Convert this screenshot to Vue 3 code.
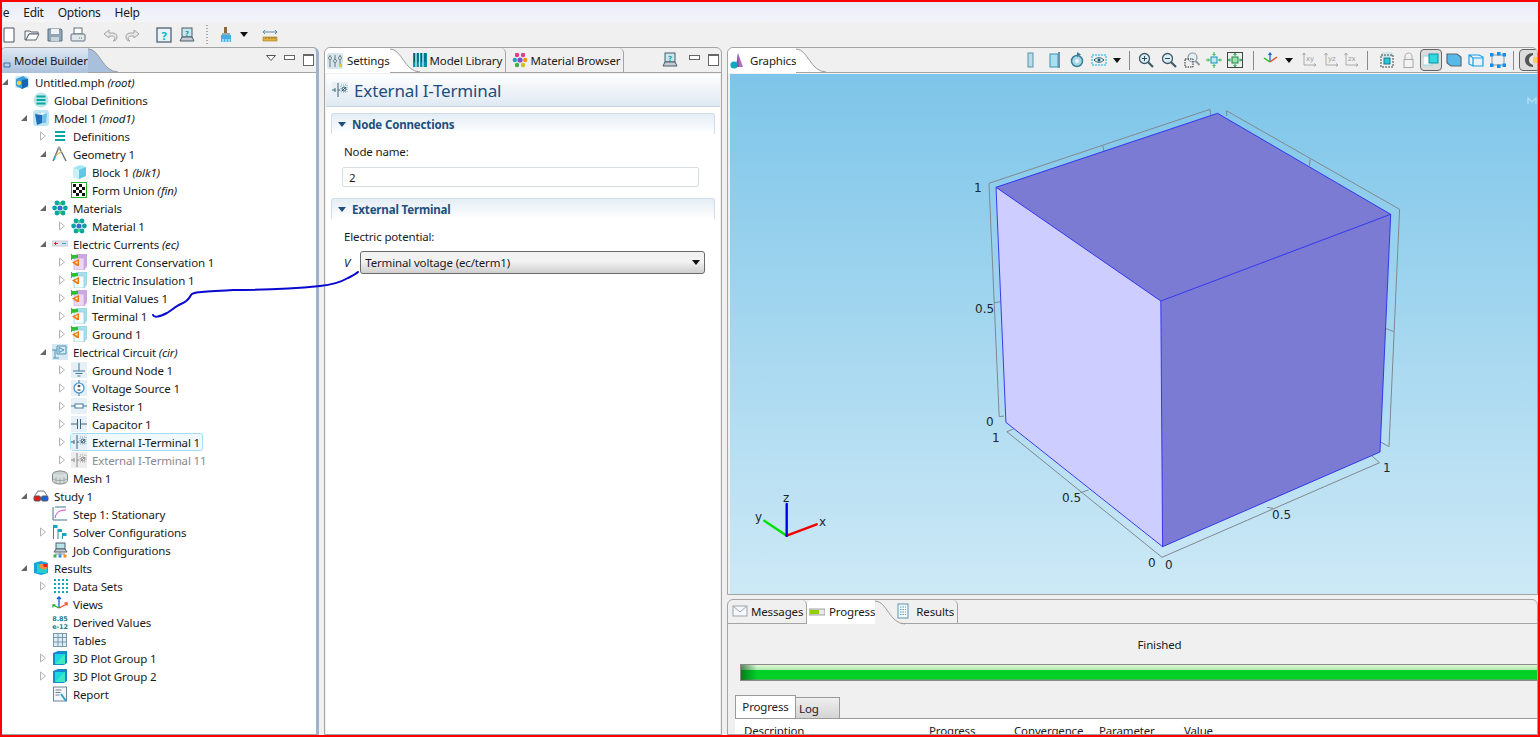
<template>
  <div class="app">
    <div class="menubar">
      <span class="menu-file">File</span>
      <span>Edit</span>
      <span>Options</span>
      <span>Help</span>
    </div>
    <div class="toolbar">
      <span
        v-for="(t, i) in mainTools"
        :key="i"
        class="tool"
        :style="{ width: t.w + 'px' }"
      >
        <svg v-if="t.icon" class="ic" viewBox="0 0 16 16" v-html="icons[t.icon]"></svg>
        <i v-else-if="t.drop" class="drop"></i>
        <i v-else-if="t.grip" class="grip"></i>
      </span>
    </div>

    <div class="main">
      <section class="panel builder">
        <header class="strip">
          <div class="tab active-blue">
            <svg class="ic builder-ic" viewBox="0 0 16 16" v-html="icons.builder"></svg>
            <span>Model Builder</span>
          </div>
          <svg class="tail" viewBox="0 0 30 24"><path d="M0 0C12 0 14 23 30 23.5H0Z" fill="#a9c0dc" /><path d="M0 .5C12 .5 14 23 30 23.5" fill="none" stroke="#9a9a9a" /></svg>
          <div class="strip-btns">
            <svg class="view-menu" viewBox="0 0 10 6"><path d="M.5.5h9L5 5.5Z" fill="#fff" stroke="#555" /></svg>
            <i class="btn-min"></i>
            <i class="btn-max"></i>
          </div>
        </header>
        <div class="tree">
          <div
            v-for="n in tree"
            :key="n.label"
            class="row"
            :class="{ ghost: n.ghost }"
            :style="{ paddingLeft: n.level * 19 + 'px' }"
          >
            <span class="arrow">
              <svg v-if="n.arrow === 'open'" viewBox="0 0 8 8"><path d="M7 1V7H1Z" fill="#666" /></svg>
              <svg v-else-if="n.arrow === 'closed'" viewBox="0 0 8 10"><path d="M1.5 1 6.5 5 1.5 9Z" fill="#fff" stroke="#b4b4b4" /></svg>
            </span>
            <span class="node" :class="{ selected: n.selected }">
              <svg class="ic" viewBox="0 0 16 16" v-html="icons[n.icon]"></svg>
              <span>{{ n.label }} <em v-if="n.tag">{{ n.tag }}</em></span>
            </span>
          </div>
        </div>
      </section>

      <section class="panel settings">
        <header class="strip">
          <div class="tab active">
            <svg class="ic" viewBox="0 0 16 16" v-html="icons.settings"></svg>
            <span>Settings</span>
          </div>
          <svg class="tail tail-settings" viewBox="0 0 30 24"><path d="M0 0C12 0 14 23 30 23.5H0Z" fill="#fff" /><path d="M0 .5C12 .5 14 23 30 23.5" fill="none" stroke="#9a9a9a" /></svg>
          <div class="tab plain library">
            <svg class="ic" viewBox="0 0 16 16" v-html="icons.library"></svg>
            <span>Model Library</span>
          </div>
          <div class="tab plain browser">
            <svg class="ic" viewBox="0 0 16 16" v-html="icons.materials"></svg>
            <span>Material Browser</span>
          </div>
          <div class="strip-btns">
            <svg class="ic help-ic" viewBox="0 0 16 16" v-html="icons.laptop"></svg>
            <i class="btn-min"></i>
            <i class="btn-max"></i>
          </div>
        </header>
        <div class="settings-body">
          <h1 class="form-title">
            <svg class="ic" viewBox="0 0 16 16" v-html="icons.iterm"></svg>
            External I-Terminal
          </h1>
          <div class="sec-head"><i class="sec-tri"></i>Node Connections</div>
          <div class="sec-body">
            <label>Node name:</label>
            <div class="input">2</div>
          </div>
          <div class="sec-head"><i class="sec-tri"></i>External Terminal</div>
          <div class="sec-body">
            <label>Electric potential:</label>
            <div class="select-row">
              <em>V</em>
              <div class="select">
                <span>Terminal voltage (ec/term1)</span>
                <i class="drop"></i>
              </div>
            </div>
          </div>
        </div>
      </section>

      <div class="right">
        <section class="panel graphics">
          <header class="strip">
            <div class="tab active">
              <svg class="ic" viewBox="0 0 16 16" v-html="icons.graphics"></svg>
              <span>Graphics</span>
            </div>
            <svg class="tail" viewBox="0 0 30 24"><path d="M0 0C12 0 14 23 30 23.5H0Z" fill="#fff" /><path d="M0 .5C12 .5 14 23 30 23.5" fill="none" stroke="#9a9a9a" /></svg>
            <div class="gfx-tools">
              <span
                v-for="(t, i) in gfxTools"
                :key="i"
                class="tool"
                :class="{ on: t.on }"
                :style="{ width: t.w + 'px' }"
              >
                <svg v-if="t.icon" class="ic" viewBox="0 0 16 16" v-html="icons[t.icon]"></svg>
                <i v-else-if="t.drop" class="drop"></i>
                <i v-else class="vsep"></i>
              </span>
            </div>
          </header>
          <svg class="canvas" viewBox="730 74 810 520">
            <defs>
              <linearGradient id="sky" x1="0" y1="0" x2="0" y2="1">
                <stop offset="0" stop-color="#7dc5e9" />
                <stop offset="1" stop-color="#cde9f6" />
              </linearGradient>
            </defs>
            <rect x="730" y="74" width="810" height="520" fill="url(#sky)" />
            <path d="M1528 104V98L1532 102 1536 98V104" fill="none" stroke="#b9dff2" stroke-width="1.2" />

            <g fill="none" stroke="#808890">
              <path d="M1004 416 999.2 416.7 989 183.3 1210 109.3 1210.8 115" />
              <path d="M1226.8 116 1226.4 110.7 1399.6 209.3 1389 446.7 1380 441.7" />
              <path d="M1102.8 145.7 1104 151.7M1310 159.3 1309.5 166M994.3 302.7 1000.5 301.7M1393.8 331.7 1385.4 328.3" />
              <path d="M1013.5 429 1006.8 431.7 1162 557.3 1379.5 462.7 1372 456" />
              <path d="M1080.4 492.7 1088.5 490M1267 507.3 1273.3 508.3" />
            </g>

            <polygon points="996,187.3 1160.8,301 1162.6,546.7 1005.9,422.3" fill="#cdcdff" />
            <polygon points="996,187.3 1217.5,113.3 1390.7,214.3 1160.8,301" fill="#7b7bd3" />
            <polygon points="1160.8,301 1390.7,214.3 1380,452 1162.6,546.7" fill="#7b7bd3" />
            <g fill="none" stroke="#2a2af0" stroke-width="0.9">
              <path d="M996 187.3 1217.5 113.3 1390.7 214.3 1160.8 301Z" />
              <path d="M996 187.3 1005.9 422.3 1162.6 546.7 1380 452 1390.7 214.3" />
              <path d="M1160.8 301 1162.6 546.7" />
            </g>

            <g class="ticks">
              <text x="974" y="192">1</text>
              <text x="975" y="313">0.5</text>
              <text x="986" y="426">0</text>
              <text x="992" y="442">1</text>
              <text x="1062" y="502">0.5</text>
              <text x="1148" y="567">0</text>
              <text x="1165" y="569">0</text>
              <text x="1272" y="519">0.5</text>
              <text x="1383" y="472">1</text>
              <text x="783" y="502">z</text>
              <text x="755" y="521">y</text>
              <text x="819" y="526">x</text>
            </g>
            <g stroke-width="2.4" stroke-linecap="round">
              <path d="M786.7 535.7 764.3 520.7" stroke="#00e000" />
              <path d="M786.7 535.7 816.7 524.3" stroke="#f00000" />
              <path d="M786.7 535.7V504" stroke="#0000f0" />
            </g>
          </svg>
        </section>

        <section class="panel bottom">
          <header class="strip">
            <div class="tab plain first">
              <svg class="ic" viewBox="0 0 16 16" v-html="icons.mail"></svg>
              <span>Messages</span>
            </div>
            <div class="tab active">
              <svg class="ic" viewBox="0 0 16 16" v-html="icons.progress"></svg>
              <span>Progress</span>
            </div>
            <svg class="tail tail-progress" viewBox="0 0 30 24"><path d="M0 0C12 0 14 23 30 23.5H0Z" fill="#f0f0f0" /><path d="M0 .5C12 .5 14 23 30 23.5" fill="none" stroke="#9a9a9a" /></svg>
            <div class="tab plain results-tab">
              <svg class="ic" viewBox="0 0 16 16" v-html="icons.results"></svg>
              <span>Results</span>
            </div>
          </header>
          <div class="bottom-body">
            <div class="finished">Finished</div>
            <div class="bar"></div>
            <div class="subtabs">
              <div class="subtab on">Progress</div>
              <div class="subtab">Log</div>
            </div>
            <div class="subtable">
              <span class="c1">Description</span>
              <span class="c2">Progress</span>
              <span class="c3">Convergence</span>
              <span class="c4">Parameter</span>
              <span class="c5">Value</span>
            </div>
          </div>
        </section>
      </div>
    </div>

    <!-- hand drawn note over the screenshot -->
    <svg class="ink" viewBox="0 0 400 100">
      <path d="M153 45C154 48 159 47 167 43 172 40 176 36 181 34 186 32 189 29 191 25 193 22 197 22 233 20 262 20 290 19 320 16 331 15 341 12 348 8 352 6 356 4 358 2" />
    </svg>
  </div>
</template>

<script setup>
const physics = (top, front, line) => `
  <path d="M3 3 6 0h10v12l-3 4H3Z" fill="${top}"/>
  <path d="M3 4h10v12H3Z" fill="${front}"/>
  <path d="M3 3 6 0h10v12l-3 4H3ZM3 4h10v12" fill="none" stroke="${line}" stroke-width=".7"/>
  <path d="M0 0h1v1h6v3L1 5v1H0Z" fill="#2fc02f"/>
  <path d="M8 5v7H6L1 8.500Z" fill="#f07a10"/>
  <path d="M4 8.500 6.500 7v3Z" fill="#fff3d0"/>`
const elecBg = '<rect width="16" height="16" fill="#e6f0f6"/>'
const cube = (a, b, c) => `
  <path d="M2 4 9 1 15 3V12L8 15 2 13Z" fill="${a}"/>
  <path d="M8 6 15 3V12L8 15Z" fill="${b}"/>
  <path d="M2 4 8 6V15L2 13Z" fill="${c}"/>`
const cluster = `
  <g fill="#0aa5a0"><circle cx="5" cy="3" r="2.4"/><circle cx="11" cy="3" r="2.4"/><circle cx="2.600" cy="8" r="2.4"/><circle cx="13.400" cy="8" r="2.4"/><circle cx="5" cy="13" r="2.4"/><circle cx="11" cy="13" r="2.4"/></g>
  <circle cx="8" cy="8" r="2.6" fill="#2f6fd0"/><circle cx="8" cy="3.5" r="1.4" fill="#3cd65c"/><circle cx="8" cy="12.5" r="1.4" fill="#3cd65c"/>`
const scale = `
  <path d="M1 10h14v4H1Z" fill="#e0b040" stroke="#a57c1a" stroke-width=".6"/>
  <path d="M4 10v2M7 10v2M10 10v2M13 10v2" stroke="#80601a" stroke-width=".7"/>
  <path d="M1 5h14M3 3 1 5l2 2M13 3l2 2-2 2" fill="none" stroke="#5a8aa0"/>`
const axes = (t) => `
  <path d="M3 1v12h12M1.5 3 3 1l1.5 2M13 11.5l2 1.5-2 1.5" fill="none" stroke="#9a9a9a" stroke-width=".8"/>
  <text x="5" y="9" font-size="7" font-family="DejaVu Sans" fill="#9a9a9a">${t}</text>`

const icons = {
  builder: '<path d="M0 3h6v2H3v8h3M9 10h6v4H9Z" fill="none" stroke="#3a6ea5"/>',
  settings: `<rect width="16" height="16" rx="2" fill="#d7e6ec"/><g stroke="#607a80" fill="none"><path d="M3 2v12M8 2v12M13 2v12"/></g><g fill="#fff" stroke="#4b686e" stroke-width=".8"><circle cx="3" cy="5" r="1.5"/><circle cx="8" cy="8" r="1.5"/><circle cx="13" cy="5" r="1.5"/></g><path d="M12 11h3v3h-3Z" fill="#f2c430"/>`,
  library: '<rect x="1" y="1" width="14" height="14" fill="#0a8fa8"/><path d="M4 1v14M7.5 1v14M11 1v14" stroke="#d8f4f8" stroke-width="1.2"/><path d="M2.5 1v9M6 1v9M9.5 1v9M13 1v9" stroke="#05596a" stroke-width="1"/>',
  materials: `<g fill="#e03c8c"><circle cx="5" cy="3" r="2.2"/><circle cx="11" cy="3" r="2.2"/></g><circle cx="2.8" cy="8" r="2.2" fill="#20a0d0"/><circle cx="13.2" cy="8" r="2.2" fill="#f09020"/><circle cx="5" cy="13" r="2.2" fill="#40b040"/><circle cx="11" cy="13" r="2.2" fill="#d0c020"/><circle cx="8" cy="8" r="2.6" fill="#8050c0"/>`,
  graphics: '<path d="M8 0 13 14H6Z" fill="#b070c0"/><path d="M8 0 6 14H9Z" fill="#8a4da0"/><circle cx="4" cy="12" r="3.6" fill="#0ca8c0"/>',
  mail: '<rect x="1" y="3" width="14" height="10" fill="#f6f8fa" stroke="#98a6b0"/><path d="M1 3 8 9l7-6" fill="none" stroke="#98a6b0"/>',
  progress: '<rect x="0" y="5" width="16" height="6" fill="#e8e8e8" stroke="#8a8a8a" stroke-width=".8"/><rect x="1" y="6" width="9" height="4" fill="#8fcf10"/>',
  results: '<rect x="3" y="1" width="10" height="14" fill="#f4f8fb" stroke="#5f93b0"/><path d="M5 4h6M5 6.5h6M5 9h6M5 11.5h6" stroke="#4aa0c8" stroke-dasharray="1.5 1"/>',
  file: '<path d="M3 1h10v14H3Z" fill="#fff" stroke="#4a5560"/>',
  open: '<path d="M1 4h5l1 1h7v2H5L2 13H1Z" fill="#eef2f5" stroke="#58656f"/><path d="M5 7h10l-3 6H2Z" fill="#fff" stroke="#58656f"/>',
  save: '<path d="M1 2h13l1 1v11H1Z" fill="#8fa5b5" stroke="#5d7080"/><rect x="4" y="2" width="8" height="5" fill="#eef2f5"/><rect x="4" y="10" width="8" height="4" fill="#c8d4dc"/>',
  print: '<rect x="4" y="1" width="8" height="6" fill="#fff" stroke="#627080"/><rect x="1" y="7" width="14" height="7" rx="1" fill="#e0e6ea" stroke="#627080"/><path d="M9 11h4" stroke="#3aa050" stroke-dasharray="1 1"/>',
  undo: '<path d="M7 3 2 7l5 4V9h3c2 0 3 1 3 3l-2 2c3 0 4-2 4-4 0-3-2-4-5-4H7Z" fill="#e8e8e8" stroke="#a4a4a4"/>',
  redo: '<path d="M9 3l5 4-5 4V9H6c-2 0-3 1-3 3l2 2c-3 0-4-2-4-4 0-3 2-4 5-4h3Z" fill="#e8e8e8" stroke="#a4a4a4"/>',
  help: '<rect x="1" y="1" width="14" height="14" fill="#eaf2f6" stroke="#40586a" stroke-width="1.2"/><text x="8" y="12.5" text-anchor="middle" font-size="11" font-weight="700" font-family="DejaVu Sans" fill="#10c0c8">?</text>',
  laptop: '<rect x="3" y="1" width="10" height="9" fill="#c8e6ee" stroke="#4a5d6a"/><text x="8" y="8.5" text-anchor="middle" font-size="7" font-weight="700" font-family="DejaVu Sans" fill="#10a0a8">?</text><path d="M3 10 1 14H15L13 10Z" fill="#c4ccd2" stroke="#4a5d6a"/>',
  brush: '<rect x="6" y="0" width="3" height="7" fill="#8a6a40"/><rect x="4" y="6" width="8" height="2" fill="#98a8b0"/><path d="M3 8h10v7H3Z" fill="#40b0e0"/><path d="M5 12v3M8 12v3M11 12v3" stroke="#fff"/>',
  ruler: scale,
  root: `<rect x="1" y="2" width="14" height="12" rx="2" fill="#cfe8f8"/><path d="M2 5 9 2l5 3v7l-6 3-6-3Z" fill="#3aa0d8"/><path d="M8 6l6-1v7l-6 3Z" fill="#1765b0"/><circle cx="5" cy="9" r="2.2" fill="#f2d040"/>`,
  globals: '<circle cx="8" cy="8" r="7.5" fill="#bfe6ea"/><path d="M3.500 4.500h9M3.500 8h9M3.500 11.500h9" stroke="#08a8a0" stroke-width="2"/>',
  model: '<rect width="16" height="16" rx="3" fill="#bde6f4"/><path d="M2 4 9 2v11l-5 2Z" fill="#1f6fb8"/><path d="M9 2l5 1-1 10-4 0Z" fill="#6fc0e8"/><path d="M2 4 9 2l5 1-5 2Z" fill="#e8f6fc"/>',
  defs: '<path d="M3 4h10M3 8h10M3 12h10" stroke="#0aa8a0" stroke-width="2"/>',
  geometry: '<path d="M7 1 1 15M7 1l7 14" stroke="#6f767a" stroke-width="1.500" fill="none"/><path d="M3 10 10 5" stroke="#e0c060" stroke-width="1.500"/><path d="M2 14 4 9" stroke="#38b0d8" stroke-width="1.500"/><circle cx="7" cy="2" r="1.500" fill="#9aa0a4"/>',
  block: cube('#a0e8f2', '#60c8e0', '#c8f2f8'),
  form: `<rect x=".5" y=".5" width="15" height="15" fill="#fff" stroke="#20b020"/><path d="M2 2h3v3H2ZM8 2h3v3H8ZM5 5h3v3H5ZM11 5h3v3h-3ZM2 8h3v3H2ZM8 8h3v3H8ZM5 11h3v3H5ZM11 11h3v3h-3Z" fill="#111"/>`,
  cluster,
  ec: '<rect y="5" width="16" height="5" fill="#dfe6ee" stroke="#a8b0ba" stroke-width=".6"/><path d="M2 7.5h4" stroke="#e02020"/><path d="M10 7.5h4" stroke="#20a0d8"/><path d="M3.5 6v3" stroke="#e02020"/>',
  physP: physics('#cda8e0', '#ecd8f4', '#c8a8dc'),
  physC: physics('#a8dfe8', '#f2fbfd', '#8cccdc'),
  circuit: '<rect width="16" height="16" fill="#d6e9f2"/><path d="M5 2h9v8H5ZM7 3.500v5l5-2.500Z" fill="none" stroke="#4a94b4"/><path d="M0 6h5M3 14V6M1 14h6" fill="none" stroke="#4a94b4"/>',
  ground: elecBg + '<path d="M8 1v8M2 9h12M4.500 11.500h7M6.500 14h3" stroke="#3f7a9c" fill="none"/>',
  source: elecBg + '<circle cx="8" cy="8" r="5" fill="#fff" stroke="#3a90c8" stroke-width="1.200"/><path d="M8 0v3M8 13v3" stroke="#3f7a9c"/><path d="M6.500 6h3M8 4.800v2.400M6.500 10h3" stroke="#223" fill="none"/>',
  resistor: elecBg + '<path d="M0 8h4M12 8h4" stroke="#3f7a9c"/><rect x="4" y="6" width="8" height="4" fill="#fff" stroke="#3f7a9c"/>',
  capacitor: elecBg + '<path d="M0 8h6.500M9.500 8H16M6.500 3v10M9.500 3v10" stroke="#3f647a" fill="none"/>',
  iterm: elecBg + '<path d="M0 8h3M3 6v4M6 1v14M6 8h2" stroke="#3f647a" fill="none"/><rect x="9" y="3" width="6" height="7" fill="none" stroke="#8aa8b8" stroke-dasharray="1 1"/><circle cx="12" cy="7" r="2" fill="none" stroke="#3f647a"/><path d="M10 9 14 5" stroke="#3f647a"/>',
  itermGhost: '<rect width="16" height="16" fill="#ededed"/><path d="M0 8h3M3 6v4M6 1v14M6 8h2" stroke="#8a8a8a" fill="none"/><rect x="9" y="3" width="6" height="7" fill="none" stroke="#aaa" stroke-dasharray="1 1"/><circle cx="12" cy="7" r="2" fill="none" stroke="#8a8a8a"/><path d="M10 9 14 5" stroke="#8a8a8a"/>',
  mesh: '<ellipse cx="8" cy="4.500" rx="7.500" ry="3.500" fill="#c8d0d0" stroke="#7c8888"/><path d="M.5 4.500v6c0 2 3.500 3.500 7.500 3.500s7.500-1.500 7.500-3.500v-6" fill="#d8dede" stroke="#7c8888"/><path d="M4 7v6M8 8v6M12 7v6M1 9c3 2 11 2 14 0" fill="none" stroke="#8a9696" stroke-width=".7"/>',
  study: '<path d="M1 9 5 3h6l4 6" fill="none" stroke="#6a7a88"/><rect x="1" y="8" width="6.500" height="5" rx="1.500" fill="#e81818" stroke="#555"/><rect x="8.500" y="8" width="6.500" height="5" rx="1.500" fill="#1860e0" stroke="#555"/>',
  step: '<path d="M1 1v13h14" fill="none" stroke="#3c7a90"/><path d="M3 12C4 6 8 4 14 4" fill="none" stroke="#d040d0"/><path d="M3 1h11" stroke="#3c7a90"/>',
  solver: '<path d="M1.500 1v14M6 5v10M10.500 9v6" stroke="#2a8aa0" fill="none"/><path d="M1.500 1h4v3h-4ZM6 5h4v3H6ZM10.500 9h4v3h-4Z" fill="#18a8c0"/>',
  job: '<rect x="4" y="1" width="9" height="6" fill="#b8e4e8" stroke="#50606c"/><path d="M4 7 2 10H15L13 7Z" fill="#c8d0d6" stroke="#50606c"/><path d="M8 10v2M3 12h10" stroke="#80909a"/><rect x="1.500" y="12.500" width="3" height="3" fill="#40b040"/><rect x="6.500" y="12.500" width="3" height="3" fill="#3090e0"/><rect x="11.500" y="12.500" width="3" height="3" fill="#f09020"/>',
  resultsNode: '<path d="M1 3 8 1l7 2v10l-7 2-7-2Z" fill="#18a0d8"/><path d="M4 4h10v9H4Z" fill="#20d0d0"/><path d="M7 4h7v4l-3 2-4-2Z" fill="#f09030"/><path d="M10 4h4v3h-3Z" fill="#e82020"/>',
  datasets: '<g fill="#10a8c0"><path d="M2 1h2v2H2ZM6 1h2v2H6ZM10 1h2v2h-2ZM14 1h2v2h-2ZM2 5h2v2H2ZM6 5h2v2H6ZM10 5h2v2h-2ZM14 5h2v2h-2ZM2 9h2v2H2ZM6 9h2v2H6ZM10 9h2v2h-2ZM14 9h2v2h-2ZM2 13h2v2H2ZM6 13h2v2H6ZM10 13h2v2h-2ZM14 13h2v2h-2Z"/></g>',
  views: '<path d="M7 12V1M5 3l2-2 2 2" stroke="#1060d0" fill="none" stroke-width="1.300"/><path d="M7 12 1 9M1 11.500V9h2.500" fill="none" stroke="#20b020" stroke-width="1.300"/><path d="M7 12l8-4M12.500 7H15v2.500" fill="none" stroke="#e85020" stroke-width="1.300"/>',
  derived: '<text x="8" y="7" text-anchor="middle" font-size="6.500" font-weight="700" font-family="DejaVu Sans" fill="#2c7a8c">8.85</text><text x="8" y="14.500" text-anchor="middle" font-size="6.500" font-weight="700" font-family="DejaVu Sans" fill="#18808c">e-12</text>',
  tables: '<rect x="1.500" y="1.500" width="13" height="13" fill="#dcecf4" stroke="#7a9aac"/><path d="M1.500 5.500h13M1.500 10h13M6 1.500v13M10.500 1.500v13" stroke="#7a9aac"/>',
  plot: '<path d="M1 3 6 1h9v12l-3 2H1Z" fill="#1888d0"/><rect x="3" y="4" width="10" height="10" fill="#18d8e0"/><path d="M3 14 13 4v10Z" fill="#40e8c0"/>',
  report: '<rect x="1.500" y="1" width="13" height="14" fill="#f4f7f9" stroke="#6a8494"/><path d="M3.500 4h6M3.500 6.500h5M3.500 9h4" stroke="#6a8494"/><path d="M9 8l5 7" stroke="#38a0d0" stroke-width="2"/>',
  rail: '<rect x="5" y="1" width="5" height="14" fill="#b8dce8" stroke="#5a92a8"/>',
  split: '<rect x="3" y="2" width="8" height="13" fill="#a8e0f0" stroke="#3a92b0"/><path d="M12 0v16" stroke="#6a94a8" stroke-width="2"/>',
  rotate: '<circle cx="8" cy="9" r="5.500" fill="#a8d8e8" stroke="#3a7f98" stroke-width="1.500"/><circle cx="8" cy="9" r="2" fill="#e8f6fa"/><path d="M8 0v5l4-2.500Z" fill="#3a7f98"/>',
  eye: '<rect x="1" y="3" width="14" height="10" fill="none" stroke="#10b0e0" stroke-dasharray="2 1"/><path d="M3 8c3-3 7-3 10 0-3 3-7 3-10 0Z" fill="#d8f2f8" stroke="#2a5a70"/><circle cx="8" cy="8" r="1.500" fill="#2a5a70"/>',
  zoomIn: '<circle cx="6.500" cy="6.500" r="5" fill="#d8eef4" stroke="#445a68" stroke-width="1.300"/><path d="M10 10l5 5" stroke="#445a68" stroke-width="2.200"/><path d="M4 6.500h5M6.500 4v5" stroke="#304858"/>',
  zoomOut: '<circle cx="6.500" cy="6.500" r="5" fill="#d8eef4" stroke="#445a68" stroke-width="1.300"/><path d="M10 10l5 5" stroke="#445a68" stroke-width="2.200"/><path d="M4 6.500h5" stroke="#304858"/>',
  zoomBox: '<circle cx="8.500" cy="5.500" r="4.500" fill="#e4f0f4" stroke="#8a9aa4" stroke-width="1.200"/><path d="M11.500 9l4 4" stroke="#8a9aa4" stroke-width="2"/><rect x="1" y="7" width="8" height="8" fill="none" stroke="#222" stroke-dasharray="1.500 1"/>',
  zoomFit: '<rect x="5" y="5" width="6" height="6" fill="#bfe8f2" stroke="#1890b0"/><path d="M8 0v3M6.500 2 8 3.500 9.500 2M8 16v-3M6.500 14 8 12.500 9.500 14M0 8h3M2 6.500 3.500 8 2 9.500M16 8h-3M14 6.500 12.500 8 14 9.500" fill="none" stroke="#20b040"/>',
  zoomAll: '<rect x=".5" y=".5" width="15" height="15" fill="#e8f0f0" stroke="#444"/><rect x="5" y="5" width="6" height="6" fill="#9fe0b0" stroke="#208040"/><path d="M8 1v3M6.500 3 8 1.500 9.500 3M8 15v-3M6.500 13 8 14.500 9.500 13M1 8h3M3 6.500 1.500 8 3 9.500M15 8h-3M13 6.500 14.500 8 13 9.500" fill="none" stroke="#10a040"/>',
  triad: '<path d="M8 10V1M6.500 3 8 1l1.500 2" stroke="#1060d0" fill="none" stroke-width="1.200"/><path d="M8 10 2 6" stroke="#20c020" stroke-width="1.500"/><path d="M8 10l7-5" stroke="#e85020" stroke-width="1.500"/>',
  xy: axes('xy'),
  yz: axes('yz'),
  zx: axes('zx'),
  select: '<path d="M3 1h10v3H3Z" fill="none" stroke="#a8dce4"/><rect x="2" y="3" width="12" height="12" fill="none" stroke="#444" stroke-dasharray="2 1"/><rect x="5" y="6" width="6" height="6" fill="#28c8d8" stroke="#147a8c"/>',
  lock: '<path d="M4 8V4c0-4 7-4 7 0v4" fill="none" stroke="#a8a8a8"/><rect x="3" y="7.500" width="9" height="8" fill="#f4f4f4" stroke="#a8a8a8"/>',
  trans: '<rect x="0" y="4" width="9" height="9" fill="#fff" stroke="#88d8e4"/><rect x="6" y="2" width="9" height="9" fill="#30d8e0" stroke="#108ca0"/>',
  solid: '<path d="M1 2h10l4 3v9H5L1 11Z" fill="#58b8e8" stroke="#5a6a74" stroke-width="1.200"/>',
  wire: '<path d="M1 3h10l4 2v9H5L1 12Z M1 3l4 3h10M5 6v8" fill="none" stroke="#10a0f0" stroke-width="1.200"/>',
  boxes: '<rect x="2" y="3" width="12" height="10" fill="none" stroke="#8a98a0"/><g fill="#1090f0"><rect x="0" y="1" width="3.500" height="3.500"/><rect x="7" y="0" width="3.500" height="3.500"/><rect x="12.500" y="1" width="3.500" height="3.500"/><rect x="0" y="11.500" width="3.500" height="3.500"/><rect x="7" y="12.500" width="3.500" height="3.500"/><rect x="12.500" y="11.500" width="3.500" height="3.500"/></g>',
  lamp: '<path d="M10 1C5 1 2 4 2 8s3 7 8 7Z" fill="#555"/><path d="M10 3c-3 1-4 3-4 5s1 4 4 5Z" fill="#e8e8e8"/><path d="M10 5h5v6h-5Z" fill="#f0d060"/>'
}

const mainTools = [
  { icon: 'file', w: 23 }, { icon: 'open', w: 23 }, { icon: 'save', w: 23 }, { icon: 'print', w: 24 },
  { w: 8 },
  { icon: 'undo', w: 23 }, { icon: 'redo', w: 23 },
  { w: 8 },
  { icon: 'help', w: 23 }, { icon: 'laptop', w: 23 },
  { w: 18, grip: true }, { icon: 'brush', w: 20 }, { drop: true, w: 16 },
  { w: 4 }, { icon: 'ruler', w: 28 }
]

const gfxTools = [
  { icon: 'rail', w: 24 }, { icon: 'split', w: 23 }, { icon: 'rotate', w: 22 }, { icon: 'eye', w: 22 }, { drop: true, w: 14 },
  { w: 10 },
  { icon: 'zoomIn', w: 23 }, { icon: 'zoomOut', w: 23 }, { icon: 'zoomBox', w: 23 }, { icon: 'zoomFit', w: 22 }, { icon: 'zoomAll', w: 20 },
  { w: 16 },
  { icon: 'triad', w: 18 }, { drop: true, w: 19 }, { icon: 'xy', w: 21 }, { icon: 'yz', w: 23 }, { icon: 'zx', w: 18 },
  { w: 15 },
  { icon: 'select', w: 23 }, { icon: 'lock', w: 22 }, { icon: 'trans', w: 22, on: true }, { icon: 'solid', w: 23 }, { icon: 'wire', w: 22 }, { icon: 'boxes', w: 21 },
  { w: 11 },
  { icon: 'lamp', w: 24, on: true }
]

const tree = [
  { level: 0, arrow: 'open', icon: 'root', label: 'Untitled.mph', tag: '(root)' },
  { level: 1, icon: 'globals', label: 'Global Definitions' },
  { level: 1, arrow: 'open', icon: 'model', label: 'Model 1', tag: '(mod1)' },
  { level: 2, arrow: 'closed', icon: 'defs', label: 'Definitions' },
  { level: 2, arrow: 'open', icon: 'geometry', label: 'Geometry 1' },
  { level: 3, icon: 'block', label: 'Block 1', tag: '(blk1)' },
  { level: 3, icon: 'form', label: 'Form Union', tag: '(fin)' },
  { level: 2, arrow: 'open', icon: 'cluster', label: 'Materials' },
  { level: 3, arrow: 'closed', icon: 'cluster', label: 'Material 1' },
  { level: 2, arrow: 'open', icon: 'ec', label: 'Electric Currents', tag: '(ec)' },
  { level: 3, arrow: 'closed', icon: 'physP', label: 'Current Conservation 1' },
  { level: 3, arrow: 'closed', icon: 'physC', label: 'Electric Insulation 1' },
  { level: 3, arrow: 'closed', icon: 'physP', label: 'Initial Values 1' },
  { level: 3, arrow: 'closed', icon: 'physC', label: 'Terminal 1' },
  { level: 3, arrow: 'closed', icon: 'physC', label: 'Ground 1' },
  { level: 2, arrow: 'open', icon: 'circuit', label: 'Electrical Circuit', tag: '(cir)' },
  { level: 3, arrow: 'closed', icon: 'ground', label: 'Ground Node 1' },
  { level: 3, arrow: 'closed', icon: 'source', label: 'Voltage Source 1' },
  { level: 3, arrow: 'closed', icon: 'resistor', label: 'Resistor 1' },
  { level: 3, arrow: 'closed', icon: 'capacitor', label: 'Capacitor 1' },
  { level: 3, arrow: 'closed', icon: 'iterm', label: 'External I-Terminal 1', selected: true },
  { level: 3, arrow: 'closed', icon: 'itermGhost', label: 'External I-Terminal 11', ghost: true },
  { level: 2, icon: 'mesh', label: 'Mesh 1' },
  { level: 1, arrow: 'open', icon: 'study', label: 'Study 1' },
  { level: 2, icon: 'step', label: 'Step 1: Stationary' },
  { level: 2, arrow: 'closed', icon: 'solver', label: 'Solver Configurations' },
  { level: 2, icon: 'job', label: 'Job Configurations' },
  { level: 1, arrow: 'open', icon: 'resultsNode', label: 'Results' },
  { level: 2, arrow: 'closed', icon: 'datasets', label: 'Data Sets' },
  { level: 2, icon: 'views', label: 'Views' },
  { level: 2, icon: 'derived', label: 'Derived Values' },
  { level: 2, icon: 'tables', label: 'Tables' },
  { level: 2, arrow: 'closed', icon: 'plot', label: '3D Plot Group 1' },
  { level: 2, arrow: 'closed', icon: 'plot', label: '3D Plot Group 2' },
  { level: 2, icon: 'report', label: 'Report' }
]
</script>

<style scoped>
.app {
  position: relative;
  width: 1540px;
  height: 737px;
  box-sizing: border-box;
  border: 2px solid #f00;
  background: #f0f0f0;
  overflow: hidden;
  display: flex;
  flex-direction: column;
  font-family: "Noto Sans", sans-serif;
  font-size: 11.5px;
  letter-spacing: -0.15px;
  color: #1a1a1a;
}

.ic {
  width: 16px;
  height: 16px;
  flex-shrink: 0;
}

.menubar {
  height: 20px;
  flex-shrink: 0;
  display: flex;
  align-items: center;
  gap: 14px;
  background: linear-gradient(#e9ecf6, #f4f5fb);
  font-size: 12px;
  letter-spacing: -0.25px;
}
.menu-file {
  margin-left: -11px;
}

.toolbar {
  height: 23px;
  flex-shrink: 0;
  display: flex;
  align-items: center;
  margin-left: -5px;
  padding-top: 2px;
  box-sizing: border-box;
}
.tool {
  height: 22px;
  display: flex;
  align-items: center;
  justify-content: center;
  flex-shrink: 0;
  box-sizing: border-box;
}
.tool.on {
  border: 1px solid #666;
  border-radius: 4px;
  background: #dcdcdc;
}
.drop {
  width: 0;
  height: 0;
  border-left: 4px solid transparent;
  border-right: 4px solid transparent;
  border-top: 5px solid #111;
}
.grip {
  width: 2px;
  height: 20px;
  background: repeating-linear-gradient(#aaa 0 1px, transparent 1px 3px);
}
.vsep {
  width: 1px;
  height: 19px;
  background: #8a8a8a;
}

.main {
  flex: 1;
  min-height: 0;
  display: flex;
  gap: 5px;
  padding-top: 2px;
}

.panel {
  display: flex;
  flex-direction: column;
  box-sizing: border-box;
  border: 1px solid #a4a4a4;
  border-radius: 6px 6px 0 0;
  overflow: hidden;
  background: #f0f0f0;
}

.strip {
  height: 24px;
  flex-shrink: 0;
  display: flex;
  align-items: stretch;
  position: relative;
  border-bottom: 1px solid #a4a4a4;
}
.tab {
  display: flex;
  align-items: center;
  gap: 4px;
  padding-left: 2px;
  white-space: nowrap;
}
.tab.active {
  background: #fff;
  margin-bottom: -1px;
  border-radius: 5px 0 0 0;
}
.active-blue {
  background: linear-gradient(#dfe8f3, #a9c0dc);
  margin-bottom: -1px;
  padding-left: 0;
  gap: 3px;
}
.builder-ic {
  margin-left: -6px;
}
.tail {
  width: 30px;
  height: 25px;
  margin-right: -6px;
  flex-shrink: 0;
  position: relative;
  z-index: 1;
}
.tail-settings {
  margin-right: -13px;
}
.tail-progress {
  margin-right: -14px;
}
.tab.plain {
  padding: 0 3px 0 4px;
  border-right: 1px solid #a4a4a4;
  border-radius: 0 5px 0 0;
}
.library {
  width: 99px;
  box-sizing: border-box;
  gap: 2px;
  padding-left: 5px !important;
}
.browser {
  gap: 3px;
  padding-left: 6px !important;
}
.strip-btns {
  margin-left: auto;
  display: flex;
  align-items: center;
  gap: 8px;
  padding-right: 2px;
}
.view-menu {
  width: 10px;
  height: 6px;
  margin-top: -4px;
}
.btn-min {
  width: 9px;
  height: 3px;
  margin-top: -5px;
  border: 1px solid #666;
  background: #fff;
}
.btn-max {
  width: 9px;
  height: 9px;
  border: 1px solid #666;
  border-top-width: 2px;
  background: #fff;
}
.help-ic {
  margin-right: 3px;
}

.builder {
  width: 319px;
  margin-left: -2px;
  flex-shrink: 0;
  border-right: 3px solid #9fb3cd;
}
.tree {
  flex: 1;
  background: #fff;
}
.row {
  height: 18px;
  display: flex;
  align-items: center;
  white-space: nowrap;
}
.row.ghost {
  color: #8a8a8a;
}
.arrow {
  width: 13px;
  height: 18px;
  margin-left: -3px;
  display: flex;
  align-items: center;
  justify-content: center;
  flex-shrink: 0;
}
.arrow svg {
  width: 8px;
  height: 10px;
}
.node {
  height: 18px;
  display: flex;
  align-items: center;
  gap: 5px;
  box-sizing: border-box;
  border: 1px solid transparent;
  border-radius: 3px;
  padding: 0 2px 0 0;
  margin-left: 2px;
}
.node.selected {
  border-color: #a6dcf6;
  background: #f0f9fe;
}

.settings {
  width: 398px;
  flex-shrink: 0;
}
.settings-body {
  flex: 1;
  background: #fff;
  margin: 1px 1px 0;
}
.form-title {
  height: 32px;
  margin: 0;
  display: flex;
  align-items: center;
  gap: 6px;
  padding-left: 6px;
  font-size: 17px;
  font-weight: 400;
  color: #1d4d7d;
  background: linear-gradient(#fff, #dfe9f2);
  border-bottom: 1px solid #c4d4e2;
}
.sec-head {
  height: 20px;
  margin: 6px 5px 0;
  padding-left: 6px;
  display: flex;
  align-items: center;
  gap: 6px;
  border: 1px solid #d0deea;
  border-bottom: none;
  border-radius: 3px 3px 0 0;
  background: linear-gradient(#e4edf5, #fff);
  font-weight: 700;
  color: #1f4f80;
}
.sec-tri {
  width: 0;
  height: 0;
  border-left: 4px solid transparent;
  border-right: 4px solid transparent;
  border-top: 5px solid #1f4f80;
}
.sec-body {
  padding: 9px 0 0 18px;
  display: flex;
  flex-direction: column;
}
.sec-body label {
  height: 18px;
  line-height: 18px;
}
.input {
  width: 357px;
  height: 20px;
  box-sizing: border-box;
  margin: 6px 0 5px -2px;
  padding-left: 6px;
  line-height: 19px;
  border: 1px solid #d8dde2;
  border-radius: 2px;
}
.select-row {
  display: flex;
  align-items: center;
  margin-top: 5px;
  gap: 10px;
}
.select {
  width: 345px;
  height: 23px;
  box-sizing: border-box;
  display: flex;
  align-items: center;
  justify-content: space-between;
  padding: 0 4px;
  border: 1px solid #6a6a6a;
  border-radius: 3px;
  background: linear-gradient(#f2f2f2 0 45%, #d0d0d0);
}

.right {
  flex: 1;
  min-width: 0;
  display: flex;
  flex-direction: column;
  gap: 4px;
}
.graphics {
  height: 548px;
  flex-shrink: 0;
}
.gfx-tools {
  display: flex;
  align-items: center;
  margin-left: 199px;
  flex-shrink: 0;
}
.canvas {
  display: block;
  width: 810px;
  height: 520px;
  margin: 1px 0 0 2px;
}
.ticks {
  font-family: "DejaVu Sans", sans-serif;
  font-size: 12px;
  letter-spacing: 0;
  fill: #1c2830;
}

.bottom {
  flex: 1;
  min-height: 0;
}
.bottom .strip {
  height: 23px;
}
.bottom .tab {
  padding-bottom: 1px;
}
.first {
  width: 79px;
  box-sizing: border-box;
  gap: 3px;
}
.results-tab {
  margin-left: 0;
  gap: 5px;
}
.bottom-body {
  flex: 1;
  display: flex;
  flex-direction: column;
  padding-left: 7px;
  min-height: 0;
}
.finished {
  text-align: center;
  margin: 12px 0 0 47px;
  height: 18px;
  line-height: 18px;
  flex-shrink: 0;
}
.bar {
  height: 17px;
  flex-shrink: 0;
  margin: 10px -8px 0 5px;
  border: 1px solid #8a8a8a;
  box-sizing: border-box;
  background:
    linear-gradient(90deg, rgba(0, 70, 20, 0.6), transparent 16px),
    linear-gradient(#e0fadb, #a8e8a8 35%, #00d028 36%, #00d028 90%, #70a070);
}
.subtabs {
  display: flex;
  align-items: flex-end;
  margin-top: 13px;
  height: 24px;
  flex-shrink: 0;
}
.subtab {
  width: 44px;
  height: 21px;
  box-sizing: border-box;
  padding-left: 3px;
  line-height: 21px;
  border: 1px solid #9a9a9a;
  border-left: none;
  border-bottom: none;
  background: linear-gradient(#efefef, #d4d4d4);
}
.subtab.on {
  width: 61px;
  height: 23px;
  padding-left: 0;
  text-align: center;
  border-left: 1px solid #9a9a9a;
  background: #fff;
}
.subtable {
  flex: 1;
  min-height: 0;
  position: relative;
  background: #fff;
  border-top: 1px solid #9a9a9a;
  display: flex;
  padding-left: 9px;
  line-height: 24px;
}
.subtable span {
  flex-shrink: 0;
}
.c1,
.c2,
.c3,
.c4 {
  width: 85px;
}
.subtable .c1 {
  width: 185px;
}

.ink {
  position: absolute;
  left: -2px;
  top: 268px;
  width: 400px;
  height: 100px;
  pointer-events: none;
}
.ink path {
  fill: none;
  stroke: #0808d0;
  stroke-width: 2;
  stroke-linecap: round;
}
</style>
